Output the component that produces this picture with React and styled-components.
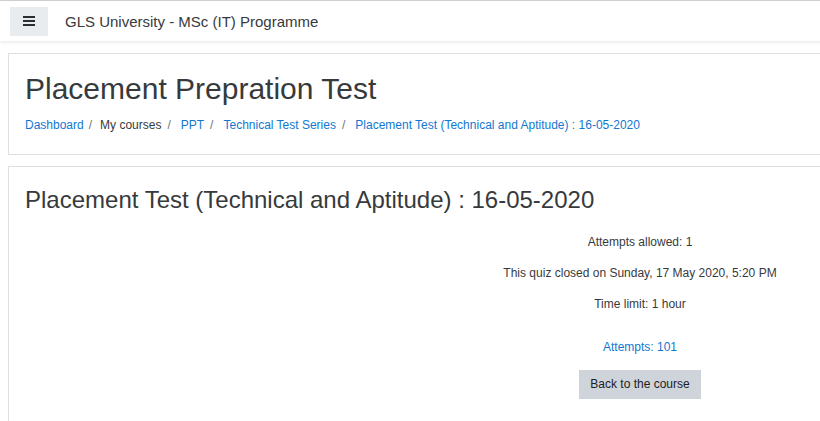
import React from 'react';
import styled, { createGlobalStyle } from 'styled-components';

const colors = {
    text: '#373a3c',
    link: '#1177d1',
    muted: '#6c757d',
    border: '#dfdfdf',
    btn: '#ced4da',
    menu: '#e9ecef'
};

const GlobalStyle = createGlobalStyle`
    body {
        margin: 0;
        background: #fff;
        font-family: "Liberation Sans", Arial, sans-serif;
        color: ${colors.text};
        overflow: hidden;
    }
`;

const Page = styled.div`
    width: 1280px;
`;

const Navbar = styled.nav`
    height: 41px;
    border-top: 1px solid #cfcfcf;
    background: #fff;
    box-shadow: 0 2px 3px rgba(0, 0, 0, .07);
    display: flex;
    align-items: center;
    padding: 0 10px;
    box-sizing: border-box;
`;

const MenuButton = styled.button`
    width: 38px;
    height: 29px;
    border: none;
    padding: 0;
    background: ${colors.menu};
    display: flex;
    align-items: center;
    justify-content: center;
    margin-right: 17px;
`;

const Brand = styled.span`
    font-size: 15px;
    color: ${colors.text};
`;

const Main = styled.main`
    padding: 12px 8px 0;
`;

const Card = styled.section`
    border: 1px solid ${colors.border};
    background: #fff;
    padding: ${p => p.$pad};
    margin-top: ${p => p.$top || 0};
`;

const Title = styled.h1`
    font-size: 30px;
    font-weight: 400;
    line-height: 1.2;
    margin: 0 0 9px;
    color: ${colors.text};
`;

const Crumbs = styled.ol`
    list-style: none;
    display: flex;
    margin: 0;
    padding: 0;
    font-size: 12px;
    line-height: 18px;
`;

const Crumb = styled.li`
    display: flex;
    color: ${p => (p.$link ? colors.link : colors.text)};

    &:not(:first-child)::before {
        content: "/";
        color: ${colors.muted};
        padding: 0 ${p => (p.$wide ? '10px' : '8px')} 0 ${p => (p.$wide ? '6px' : '5px')};
    }
`;

const QuizTitle = styled.h2`
    font-size: 24px;
    font-weight: 400;
    line-height: 1.2;
    margin: 0;
    color: ${colors.text};
`;

const Summary = styled.div`
    display: flex;
    flex-direction: column;
    align-items: center;
    margin-top: 18px;
    padding-bottom: 30px;
`;

const Info = styled.p`
    font-size: 12px;
    line-height: 18px;
    margin: 0 0 13px;
`;

const AttemptsLink = styled.a`
    font-size: 12px;
    line-height: 18px;
    color: ${colors.link};
    text-decoration: none;
    margin-top: 12px;
`;

const Button = styled.button`
    margin-top: 14px;
    border: none;
    background: ${colors.btn};
    color: #1d2125;
    font-family: inherit;
    font-size: 12px;
    line-height: 19px;
    padding: 5px 11px;
`;

const BarsIcon = () => (
    <svg width="12" height="10" viewBox="0 0 12 10">
        <rect x="0" y="0" width="12" height="2" fill="#2b2e30" />
        <rect x="0" y="4" width="12" height="2" fill="#2b2e30" />
        <rect x="0" y="8" width="12" height="2" fill="#2b2e30" />
    </svg>
);

const crumbs = [
    { label: 'Dashboard', link: true },
    { label: 'My courses', link: false },
    { label: 'PPT', link: true, wide: true },
    { label: 'Technical Test Series', link: true, wide: true },
    { label: 'Placement Test (Technical and Aptitude) : 16-05-2020', link: true, wide: true }
];

const App = () => (
    <Page>
        <GlobalStyle />
        <Navbar>
            <MenuButton aria-label="Side panel"><BarsIcon /></MenuButton>
            <Brand>GLS University - MSc (IT) Programme</Brand>
        </Navbar>
        <Main>
            <Card $pad="17px 16px 20px">
                <Title>Placement Prepration Test</Title>
                <Crumbs>
                    {crumbs.map(c => (
                        <Crumb key={c.label} $link={c.link} $wide={c.wide}>{c.label}</Crumb>
                    ))}
                </Crumbs>
            </Card>
            <Card $pad="19px 16px 0" $top="11px">
                <QuizTitle>Placement Test (Technical and Aptitude) : 16-05-2020</QuizTitle>
                <Summary>
                    <Info>Attempts allowed: 1</Info>
                    <Info>This quiz closed on Sunday, 17 May 2020, 5:20 PM</Info>
                    <Info>Time limit: 1 hour</Info>
                    <AttemptsLink href="#">Attempts: 101</AttemptsLink>
                    <Button>Back to the course</Button>
                </Summary>
            </Card>
        </Main>
    </Page>
);

export default App;
